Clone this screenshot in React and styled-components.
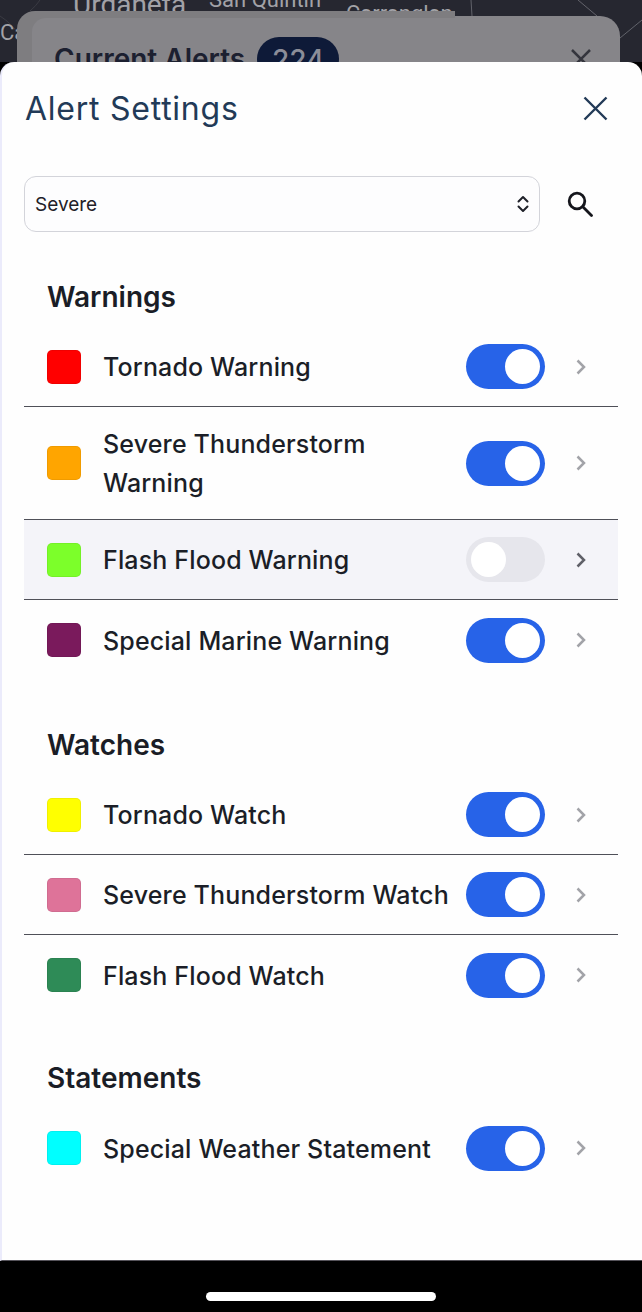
import styled, { createGlobalStyle } from "styled-components";

const GlobalStyle = createGlobalStyle`
  html, body { margin: 0; padding: 0; background: #000; }
  body { font-family: "Inter", "Liberation Sans", sans-serif; }
`;

const sections = [
  {
    title: "Warnings",
    gap: 45,
    alerts: [
      { name: "Tornado Warning", color: "#ff0000", on: true },
      { name: "Severe Thunderstorm Warning", color: "#ffa500", on: true, wrap: true },
      { name: "Flash Flood Warning", color: "#7cff2a", on: false },
      { name: "Special Marine Warning", color: "#7a1a5c", on: true },
    ],
  },
  {
    title: "Watches",
    gap: 45,
    alerts: [
      { name: "Tornado Watch", color: "#ffff00", on: true },
      { name: "Severe Thunderstorm Watch", color: "#de7399", on: true },
      { name: "Flash Flood Watch", color: "#2e8b57", on: true },
    ],
  },
  {
    title: "Statements",
    gap: 43,
    alerts: [{ name: "Special Weather Statement", color: "#00ffff", on: true }],
  },
];

const Screen = styled.div`
  display: flex;
  flex-direction: column;
  width: 642px;
  height: 1312px;
  overflow: hidden;
  background: #000;
`;

const MapArea = styled.div`
  position: relative;
  flex: none;
  height: 62px;
  overflow: hidden;
  background: #262730;
`;

const MapLabel = styled.span`
  position: absolute;
  left: ${(p) => p.$x}px;
  top: ${(p) => p.$y}px;
  font-size: ${(p) => p.$size}px;
  color: #a2a2a7;
  white-space: nowrap;
  font-family: "Roboto", sans-serif;
`;

const MapLines = styled.svg`
  position: absolute;
  left: 0;
  top: 0;
`;

const BackCard = styled.div`
  position: absolute;
  left: 17px;
  top: 16px;
  width: 603px;
  height: 60px;
  border-radius: 20px 20px 0 0;
  background: #868589;
`;

const BackTab = styled.div`
  position: absolute;
  left: 17px;
  top: 11px;
  width: 438px;
  height: 60px;
  border-radius: 18px 0 0 0;
  background: #7e7d80;
`;

const BackTabInner = styled.div`
  position: absolute;
  left: 15px;
  top: 7px;
  right: 0;
  bottom: 0;
  border-radius: 14px 0 0 0;
  background: #868589;
`;

const BackTitle = styled.div`
  position: absolute;
  left: 54px;
  top: 37px;
  display: flex;
  align-items: center;
  gap: 12px;
  font-size: 28px;
  font-weight: 600;
  color: #1c2030;
  white-space: nowrap;
`;

const BackBadge = styled.span`
  box-sizing: border-box;
  width: 82px;
  height: 44px;
  line-height: 46px;
  text-align: center;
  border-radius: 22px;
  background: #0e1a38;
  color: #8b8d98;
  font-weight: 500;
`;

const BackClose = styled.svg`
  position: absolute;
  left: 571px;
  top: 49px;
`;

const Sheet = styled.div`
  position: relative;
  flex: none;
  height: 1199px;
  box-sizing: border-box;
  padding: 0 24px 0 22px;
  background: #fefefe;
  border-radius: 14px 14px 0 0;
  border-left: 2px solid #ebebfb;
  border-bottom: 1px solid #55535a;
`;

const Header = styled.div`
  display: flex;
  align-items: center;
  justify-content: space-between;
  height: 92px;
  padding: 0 10px 0 1px;
`;

const Title = styled.h1`
  margin: 0;
  font-size: 32px;
  font-weight: 400;
  letter-spacing: 0.75px;
  color: #223a57;
`;

const Close = styled.svg`
  display: block;
`;

const FilterRow = styled.div`
  display: flex;
  align-items: center;
  margin-top: 22px;
`;

const Select = styled.div`
  display: flex;
  align-items: center;
  justify-content: space-between;
  box-sizing: border-box;
  width: 516px;
  height: 56px;
  padding: 0 9px 0 10px;
  border: 1.5px solid #d3d4da;
  border-radius: 12px;
  background: #fdfdfe;
  font-size: 19px;
  color: #1f2129;
`;

const SearchIcon = styled.svg`
  display: block;
  margin-left: 27px;
`;

const Section = styled.section`
  margin-top: ${(p) => p.$gap}px;
`;

const Heading = styled.h2`
  margin: 0 0 10px 23px;
  height: 40px;
  line-height: 41px;
  font-size: 28px;
  font-weight: 600;
  color: #1a1d26;
`;

const Row = styled.div`
  display: flex;
  align-items: center;
  box-sizing: border-box;
  width: 594px;
  min-height: 80px;
  padding: ${(p) => (p.$wrap ? "16px" : "0")} 0 ${(p) => (p.$wrap ? "16px" : "0")} 23px;
  background: ${(p) => (p.$muted ? "#f4f4f9" : "transparent")};
  border-bottom: ${(p) => (p.$last ? "none" : "1.5px solid #4f5058")};
`;

const Swatch = styled.span`
  flex: none;
  box-sizing: border-box;
  width: 34px;
  height: 34px;
  border-radius: 5px;
  border: 1px solid rgba(0, 0, 0, 0.06);
  background: ${(p) => p.$color};
`;

const Name = styled.span`
  flex: 1;
  margin-left: 22px;
  padding: 2px 10px 0 0;
  font-size: 25px;
  font-weight: 500;
  letter-spacing: 0.15px;
  line-height: 39px;
  color: #1b1e27;
  white-space: ${(p) => (p.$wrap ? "normal" : "nowrap")};
  max-width: ${(p) => (p.$wrap ? "300px" : "none")};
`;

const Toggle = styled.span`
  flex: none;
  display: flex;
  align-items: center;
  justify-content: ${(p) => (p.$on ? "flex-end" : "flex-start")};
  box-sizing: border-box;
  width: 79px;
  height: 45px;
  margin-left: auto;
  padding: 0 5px;
  border-radius: 23px;
  background: ${(p) => (p.$on ? "#2763e8" : "#e6e6ec")};
`;

const Knob = styled.span`
  width: 35px;
  height: 35px;
  border-radius: 50%;
  background: #fff;
`;

const Chevron = styled.svg`
  flex: none;
  display: block;
  margin: 0 32px 0 31px;
  color: ${(p) => (p.$muted ? "#5f6068" : "#a2a3a8")};
`;

const Footer = styled.div`
  flex: 1;
  display: flex;
  justify-content: center;
  padding-top: 31px;
`;

const HomeBar = styled.div`
  width: 230px;
  height: 9px;
  border-radius: 5px;
  background: #fff;
`;

export default function App() {
  return (
    <Screen>
      <GlobalStyle />
      <MapArea>
        <MapLines width="642" height="62" viewBox="0 0 642 62" fill="none" stroke="#62636b" strokeWidth="1">
          <path d="M472 16 L471 0 M578 0 L597 16 M620 38 L642 20" />
          <path d="M0 16 Q12 24 17 32 M40 0 Q36 6 30 11" stroke="#3a3b43" />
        </MapLines>
        <MapLabel $x={73} $y={-12} $size={28}>Urdaneta</MapLabel>
        <MapLabel $x={209} $y={-13} $size={22}>San Quintin</MapLabel>
        <MapLabel $x={346} $y={1} $size={22}>Carranglan</MapLabel>
        <MapLabel $x={0} $y={20} $size={22}>Ca</MapLabel>
        <BackCard />
        <BackTab>
          <BackTabInner />
        </BackTab>
        <BackTitle>
          Current Alerts <BackBadge>224</BackBadge>
        </BackTitle>
        <BackClose width="20" height="20" viewBox="0 0 20 20" fill="none" stroke="#34353d" strokeWidth="2.5">
          <path d="M1 1 L19 19 M19 1 L1 19" />
        </BackClose>
      </MapArea>
      <Sheet>
        <Header>
          <Title>Alert Settings</Title>
          <Close width="25" height="25" viewBox="0 0 25 25" fill="none" stroke="#223a57" strokeWidth="2.4">
            <path d="M1.5 1.5 L23.5 23.5 M23.5 1.5 L1.5 23.5" />
          </Close>
        </Header>
        <FilterRow>
          <Select>
            Severe
            <svg width="14" height="18" viewBox="0 0 14 18" fill="none" stroke="#1f2129" strokeWidth="2" strokeLinecap="round" strokeLinejoin="round">
              <path d="M2.5 6.5 L7 2 L11.5 6.5 M2.5 11.5 L7 16 L11.5 11.5" />
            </svg>
          </Select>
          <SearchIcon width="26" height="26" viewBox="0 0 26 26" fill="none" stroke="#15161c" strokeWidth="2.8" strokeLinecap="round">
            <circle cx="10" cy="10" r="7.8" />
            <path d="M15.8 15.8 L24.5 24.5" />
          </SearchIcon>
        </FilterRow>
        {sections.map((section) => (
          <Section key={section.title} $gap={section.gap}>
            <Heading>{section.title}</Heading>
            {section.alerts.map((alert, j) => (
              <Row
                key={alert.name}
                $wrap={alert.wrap}
                $muted={!alert.on}
                $last={j === section.alerts.length - 1}
              >
                <Swatch $color={alert.color} />
                <Name $wrap={alert.wrap}>{alert.name}</Name>
                <Toggle $on={alert.on}>
                  <Knob />
                </Toggle>
                <Chevron
                  $muted={!alert.on}
                  width="10"
                  height="18"
                  viewBox="0 0 10 18"
                  fill="none"
                  stroke="currentColor"
                  strokeWidth="2.5"
                >
                  <path d="M1.5 2.5 L8 9 L1.5 15.5" />
                </Chevron>
              </Row>
            ))}
          </Section>
        ))}
      </Sheet>
      <Footer>
        <HomeBar />
      </Footer>
    </Screen>
  );
}
